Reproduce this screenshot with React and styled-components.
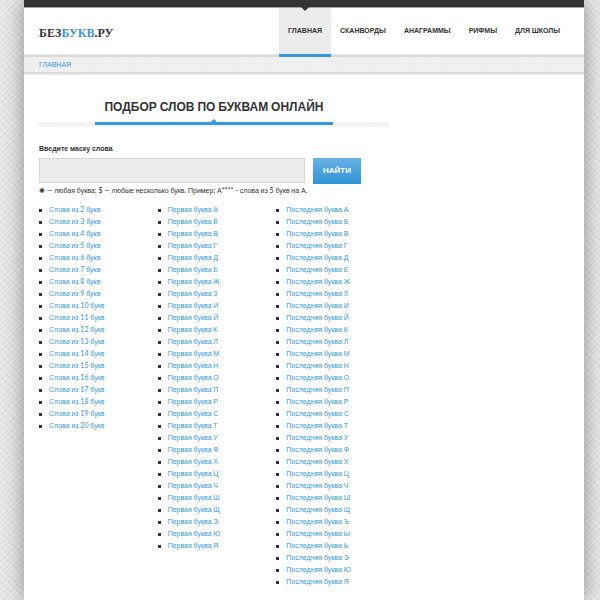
import React from 'react'
import styled, { createGlobalStyle } from 'styled-components'

const colors = {
  blue: '#3498db',
  dark: '#333333',
  line: '#d9d9d9',
  lineLight: '#ececec',
  panel: '#ececec',
}

const menu = ['Главная', 'Сканворды', 'Анаграммы', 'Рифмы', 'Для школы']

const range = (from, to) => Array.from({ length: to - from + 1 }, (_, i) => from + i)

const lists = [
  range(2, 20).map((n) => `Слова из ${n} букв`),
  [...'АБВГДЕЖЗИЙКЛМНОПРСТУФХЦЧШЩЭЮЯ'].map((letter) => `Первая буква ${letter}`),
  [...'АБВГДЕЖЗИЙКЛМНОПРСТУФХЦЧШЩЪЫЬЭЮЯ'].map((letter) => `Последняя буква ${letter}`),
]

// Cyrillic is set in Liberation Sans; spaces, digits and punctuation in Lato
function Text({ children }) {
  return children
    .split(/([^А-Яа-я]+)/)
    .map((part, i) => (i % 2 ? <Latin key={i}>{part}</Latin> : part))
}

function App() {
  return (
    <>
      <GlobalStyle />
      <Page>
        <Header>
          <Logo href="#">
            БЕЗ<span>БУКВ</span>.РУ
          </Logo>
          <Menu>
            {menu.map((item, i) => (
              <MenuLink key={item} href="#" $active={i === 0}>
                <span>
                  <Text>{item}</Text>
                </span>
              </MenuLink>
            ))}
          </Menu>
        </Header>
        <Breadcrumbs aria-label="Навигация">
          <a href="#">Главная</a>
        </Breadcrumbs>
        <Content>
          <TitleBar>
            <Title>
              <Text>Подбор слов по буквам онлайн</Text>
            </Title>
          </TitleBar>
          <form onSubmit={(e) => e.preventDefault()}>
            <Label htmlFor="mask">
              <Text>Введите маску слова</Text>
            </Label>
            <SearchRow>
              <SearchInput id="mask" type="text" />
              <SearchButton type="submit">Найти</SearchButton>
            </SearchRow>
            <Hint>
              <Text>✺ — любая буква; $ — любые несколько букв. Пример: А**** - слова из 5 букв на А.</Text>
            </Hint>
          </form>
          <Lists>
            {lists.map((items) => (
              <List key={items[0]}>
                {items.map((item) => (
                  <ListItem key={item}>
                    <a href="#">
                      <Text>{item}</Text>
                    </a>
                  </ListItem>
                ))}
              </List>
            ))}
          </Lists>
        </Content>
      </Page>
    </>
  )
}

export default App

const GlobalStyle = createGlobalStyle`
  * {
    box-sizing: border-box;
  }

  body {
    margin: 0;
    font-family: 'Liberation Sans', sans-serif;
    font-size: 7px;
    line-height: 12px;
    color: ${colors.dark};
    background-color: #e0e0e0;
    background-image:
      repeating-linear-gradient(45deg, rgba(255, 255, 255, 0.25) 0 2px, transparent 2px 5px),
      repeating-linear-gradient(-45deg, rgba(255, 255, 255, 0.25) 0 2px, transparent 2px 4px);
  }

  a {
    color: ${colors.blue};
    text-decoration: none;
  }
`

const Latin = styled.span`
  font-family: Lato, 'Liberation Sans', sans-serif;
  line-height: 1;
`

const Page = styled.div`
  min-height: 100vh;
  margin: 0 16px 0 24px;
  background-color: #fff;
  box-shadow: 0 0 20px rgba(0, 0, 0, 0.4);
`

const Header = styled.header`
  display: flex;
  justify-content: space-between;
  align-items: stretch;
  padding: 1px 15px 0;
  border-top: 7px solid ${colors.dark};
  box-shadow: inset 0 1px 0 #a0a0a0, inset 0 -2px 0 ${colors.line}, inset 0 -3px 0 ${colors.lineLight};
`

const Logo = styled.a`
  align-self: center;
  font-family: 'Liberation Serif', serif;
  font-size: 12px;
  line-height: 16px;
  font-weight: 700;
  color: ${colors.dark};

  span {
    color: ${colors.blue};
  }
`

const Menu = styled.nav`
  display: flex;
`

const MenuLink = styled.a`
  position: relative;
  padding: 17px 9px;
  border-bottom: 3px solid ${({ $active }) => ($active ? colors.blue : 'transparent')};
  background-color: ${({ $active }) => ($active ? colors.panel : 'transparent')};
  background-clip: padding-box;
  font-weight: 700;
  text-transform: uppercase;
  color: ${colors.dark};

  &::before {
    content: '';
    display: ${({ $active }) => ($active ? 'block' : 'none')};
    position: absolute;
    top: -1px;
    left: 50%;
    transform: translateX(-50%);
    border: 4px solid transparent;
    border-top-color: ${colors.dark};
    border-bottom: 0;
  }
`

const Breadcrumbs = styled.nav`
  padding: 2px 15px 1px;
  border-bottom: 2px solid ${colors.line};
  box-shadow: 0 1px 0 ${colors.lineLight};
  background: repeating-linear-gradient(45deg, #f2f2f2 0 1px, #eeeeee 1px 3px);
  text-transform: uppercase;
`

const Content = styled.main`
  width: 66%;
  padding: 25px 0 12px 15px;
  box-sizing: content-box;
  max-width: 350px;
`

const TitleBar = styled.div`
  display: flex;
  justify-content: center;
  background: repeating-linear-gradient(45deg, #f8f8f8 0 1px, #f2f2f2 1px 3px) bottom / 100% 5px no-repeat;
`

const Title = styled.h1`
  position: relative;
  margin: 0 0 2px;
  padding: 0 9px 7px;
  border-bottom: 3px solid ${colors.blue};
  font-size: 12px;
  line-height: 16px;
  text-transform: uppercase;

  &::after {
    content: '';
    position: absolute;
    bottom: 0;
    left: 50%;
    transform: translateX(-50%);
    border: 3px solid transparent;
    border-bottom-color: ${colors.blue};
    border-top: 0;
  }
`

const Label = styled.label`
  display: block;
  margin: 16px 0 3px;
  font-weight: 700;
`

const SearchRow = styled.div`
  display: flex;
  align-items: flex-start;
  gap: 8px;
`

const SearchInput = styled.input`
  width: 76%;
  height: 25px;
  padding: 4px 8px;
  border: 1px solid #d5d5d5;
  background-color: ${colors.panel};
  font: inherit;
`

const SearchButton = styled.button`
  padding: 7px 10px;
  border: 0;
  background: linear-gradient(#6ab2e4, #2e92d8);
  font: inherit;
  font-size: 8px;
  font-weight: 700;
  text-transform: uppercase;
  color: #fff;
  cursor: pointer;
`

const Hint = styled.p`
  margin: 1px 0 7px;
`

const Lists = styled.div`
  display: grid;
  grid-template-columns: repeat(3, 1fr);
  gap: 6px;
`

const List = styled.ul`
  margin: 0;
  padding: 0;
  list-style: none;
`

const ListItem = styled.li`
  display: flex;
  align-items: center;
  gap: 7px;

  &::before {
    content: '';
    width: 3px;
    height: 3px;
    background-color: ${colors.dark};
  }
`
